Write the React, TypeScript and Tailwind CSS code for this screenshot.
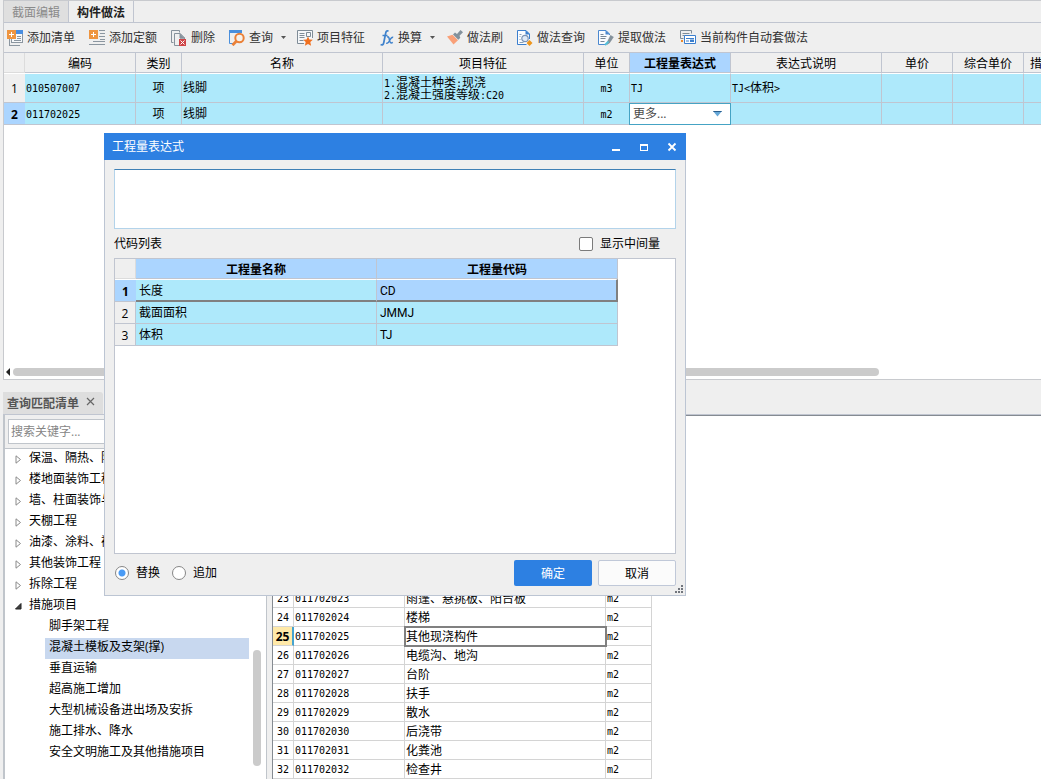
import React from "react";

const UI = "font-['Open_Sans','Noto_Sans_CJK_SC',sans-serif]";
const SONG = "font-['DejaVu_Sans_Mono','Noto_Sans_CJK_SC',monospace] text-[10px]";

function ListIcon() {
  return (
    <svg width="16" height="16" viewBox="0 0 16 16" shapeRendering="crispEdges" aria-hidden="true">
      <path d="M9 1.500h6.500v11h-11V9" fill="#f6f8fa" stroke="#8b96a0" />
      <path d="M9 0h7v4H9z" fill="#4a8ee0" />
      <path d="M2.500 9v6.500H13M10 6.500h4M10 8.500h4M7 10.500h7" fill="none" stroke="#8b96a0" />
      <path d="M0 0h9v9H0z" fill="#ee9540" />
      <path d="M4 2h1v5H4zM2 4h5v1H2z" fill="#fff" />
    </svg>
  );
}

function QuotaIcon() {
  return (
    <svg width="16" height="16" viewBox="0 0 16 16" shapeRendering="crispEdges" aria-hidden="true">
      <path d="M10 .500h6M11 3.500h5M10 6.500h6M11 9.500h5M4 11.500h12M0 14.500h16" stroke="#8b96a0" fill="none" />
      <path d="M0 0h9v9H0z" fill="#ee9540" />
      <path d="M4 2h1v5H4zM2 4h5v1H2z" fill="#fff" />
    </svg>
  );
}

function DeleteIcon() {
  return (
    <svg width="16" height="16" viewBox="0 0 16 16" aria-hidden="true">
      <path d="M2.500 12.500h-2V.500h8v2" fill="none" stroke="#87929c" />
      <path d="M8 15.500H3.500v-12H9l4.500 4.500v1M9 3.500V8h4.500z" fill="none" stroke="#87929c" />
      <path d="M9 4l4.500 4.500H9z" fill="#87929c" />
      <path d="M8 9h7v7H8z" fill="#cf4446" />
      <path d="M9.500 10.500l4 4m0-4l-4 4" stroke="#fff" />
    </svg>
  );
}

function QueryIcon() {
  return (
    <svg width="16" height="16" viewBox="0 0 16 16" aria-hidden="true">
      <path d="M4 13.500H.500V1" fill="none" stroke="#4a8fdc" />
      <path d="M0 0h13v3H0z" fill="#4a8fdc" />
      <circle cx="10.500" cy="8" r="4.200" fill="#f7f1ea" stroke="#ea8038" strokeWidth="2" />
      <path d="M7.500 11L3.500 15.200" stroke="#ea8038" strokeWidth="2.800" />
    </svg>
  );
}

function FeatureIcon() {
  return (
    <svg width="16" height="16" viewBox="0 0 16 16" aria-hidden="true">
      <path d="M7 13.500H.500v-13h15V8" fill="#f5f7f9" stroke="#7f8c97" />
      <path d="M2.500 3.500h5m-5 2h5m-5 2h5m-5 3h4M9.500 2.500h4v4h-4z" fill="none" stroke="#7f8c97" />
      <path d="M11 6.500l1.400 3 3.400.3-2.500 2.300.8 3.600-3.100-1.800-3.100 1.800.8-3.600-2.500-2.300 3.400-.3z" fill="#f07020" />
    </svg>
  );
}

function FxIcon() {
  return (
    <svg width="14" height="16" viewBox="0 0 14 16" fill="none" stroke="#3f82cc" aria-hidden="true">
      <path d="M8.500 1.200C6.800.2 6 1.500 5.600 3.500L3.800 12.500C3.400 14.700 2.300 15.500.6 14.600M2.500 5.500h5" strokeWidth="1.700" />
      <path d="M7 7.200c1.700-1 2 .5 2.500 3s1.300 3.500 3.300 2.200M13.200 7.200c-2-.3-3 2-3.700 3.500S7.800 13.700 6.300 13" strokeWidth="1.500" />
    </svg>
  );
}

function BrushIcon() {
  return (
    <svg width="16" height="15" viewBox="0 0 16 15" aria-hidden="true">
      <path d="M0 6.500l5.500-1.800 5.500 5.500L6.500 14.500z" fill="#f9a078" />
      <path d="M6 4.500L8 2.500l2 1.500L13.500 0 16 2.300l-3.500 3.500.8 2L11.300 9.800z" fill="#83919c" />
    </svg>
  );
}

function DocQueryIcon() {
  return (
    <svg width="16" height="16" viewBox="0 0 16 16" aria-hidden="true">
      <path d="M12.500 9V4L9 .500H.500v14h9" fill="#fafcff" stroke="#3b7fce" />
      <path d="M8.500 0L13 4.500H8.500z" fill="#3b7fce" />
      <path d="M2.500 4.500h2m-2 2h1m-1 3h1m-1 3h4" stroke="#8aa0b5" />
      <circle cx="8" cy="8.500" r="3.200" fill="#dfeaf8" stroke="#7d94b4" strokeWidth="1.200" />
      <path d="M12.500 10l3 3-3 3-3-3z" fill="#ee961d" />
    </svg>
  );
}

function ExtractIcon() {
  return (
    <svg width="16" height="16" viewBox="0 0 16 16" aria-hidden="true">
      <path d="M11.500 5V4L8 .500H.500v14h7" fill="#fafcff" stroke="#4b88cf" />
      <path d="M7.500 0L12 4.500H7.500z" fill="#4b88cf" />
      <path d="M2.500 4.500h3m-3 2h6m-6 2h5m-5 3h4" stroke="#788796" />
      <path d="M12.500 5L15.800 7l-4 6-3 2 .8-4z" fill="#84919b" />
      <path d="M7 15l3.500-3.500" stroke="#54bfd7" strokeWidth="2" />
    </svg>
  );
}

function AutoIcon() {
  return (
    <svg width="16" height="15" viewBox="0 0 16 15" aria-hidden="true">
      <path d="M3.500 8.500h-3V.500h11v3" fill="none" stroke="#7f8c97" />
      <path d="M2.500 3.500h7m-7 2h2" stroke="#7f8c97" />
      <path d="M4.500 5.500h11v8h-11z" fill="#fff" stroke="#3b7fce" />
      <path d="M6 8.500h8M6 11h3" stroke="#3b7fce" />
      <path d="M10 9.500h4v2.500h-4z" fill="#3b7fce" />
      <path d="M1 10h2v2H1z" fill="#ee8a2d" />
    </svg>
  );
}

const tools = [
  { label: "添加清单", icon: <ListIcon />, w: "w-[82px]" },
  { label: "添加定额", icon: <QuotaIcon />, w: "w-[82px]" },
  { label: "删除", icon: <DeleteIcon />, w: "w-[58px]" },
  { label: "查询", icon: <QueryIcon />, w: "w-[68px]", menu: true },
  { label: "项目特征", icon: <FeatureIcon />, w: "w-[83px]" },
  { label: "换算", icon: <FxIcon />, w: "w-[67px]", menu: true },
  { label: "做法刷", icon: <BrushIcon />, w: "w-[70px]" },
  { label: "做法查询", icon: <DocQueryIcon />, w: "w-[81px]" },
  { label: "提取做法", icon: <ExtractIcon />, w: "w-[82px]" },
  { label: "当前构件自动套做法", icon: <AutoIcon />, w: "w-[130px]" },
];

/* Ideographs are set at 12px beside half-width 10px monospace characters. */
function Mixed({ text }: { text: string }) {
  return (
    <>
      {text.split(/([\u3000-\u9fff]+)/).map((part, i) =>
        i % 2 ? (
          <span key={i} className="text-xs leading-none">{part}</span>
        ) : (
          part
        ),
      )}
    </>
  );
}

const columns = [
  { label: "编码", w: "w-[111px]" },
  { label: "类别", w: "w-[46px]" },
  { label: "名称", w: "w-[201px]" },
  { label: "项目特征", w: "w-[201px]" },
  { label: "单位", w: "w-[46px]" },
  { label: "工程量表达式", w: "w-[101px]", active: true },
  { label: "表达式说明", w: "w-[151px]" },
  { label: "单价", w: "w-[71px]" },
  { label: "综合单价", w: "w-[71px]" },
  { label: "措施项目", w: "w-[61px]" },
];

const cell = "border-r border-b border-[#c0c5d0] px-px pt-0.5 pb-0";

function MethodGrid() {
  return (
    <table className="w-[1081px] table-fixed border-separate border-spacing-0 text-xs">
      <thead>
        <tr className="h-5">
          <th className="w-[21px] border-r border-b border-[#dcdcdc] bg-[#efefef] p-0" />
          {columns.map((c) => (
            <th
              key={c.label}
              className={`${c.w} overflow-hidden border-r border-b border-[#c0c5d0] px-0 pt-0.5 pb-0 leading-4 whitespace-nowrap ${
                c.active ? "bg-[#abd5ff] font-bold" : "bg-[#efefef] font-normal"
              }`}
            >
              {c.label}
            </th>
          ))}
        </tr>
      </thead>
      <tbody className={SONG}>
        <tr className="h-[30px] bg-[#aee9fb]">
          <th className={`border-t border-b border-t-white border-b-[#c0c5d0] bg-[#efefef] px-0 pt-0.5 pb-0 text-xs font-normal ${UI}`}>1</th>
          <td className={`${cell} border-t border-t-white`}>010507007</td>
          <td className={`${cell} border-t border-t-white text-center`}><Mixed text="项" /></td>
          <td className={`${cell} border-t border-t-white`}><Mixed text="线脚" /></td>
          <td className={`${cell} border-t border-t-white leading-3`}>
            <div className="h-3"><Mixed text="1.混凝土种类:现浇" /></div>
            <div className="h-3"><Mixed text="2.混凝土强度等级:C20" /></div>
          </td>
          <td className={`${cell} border-t border-t-white text-center`}>m3</td>
          <td className={`${cell} border-t border-t-white`}>TJ</td>
          <td className={`${cell} border-t border-t-white`}><Mixed text="TJ<体积>" /></td>
          <td className={`${cell} border-t border-t-white`} />
          <td className={`${cell} border-t border-t-white`} />
          <td className={`${cell} border-t border-t-white`} />
        </tr>
        <tr className="h-[22px] bg-[#aee9fb]">
          <th className={`border-b border-[#c0c5d0] bg-[#abd5ff] px-0 pt-0.5 pb-0 text-xs font-bold ${UI}`}>2</th>
          <td className={cell}>011702025</td>
          <td className={`${cell} text-center`}><Mixed text="项" /></td>
          <td className={cell}><Mixed text="线脚" /></td>
          <td className={cell} />
          <td className={`${cell} text-center`}>m2</td>
          <td className="bg-white p-0">
            <div className="relative -ml-px flex h-[22px] items-center border border-[#45a3c4]">
              <select
                aria-label="工程量表达式"
                className={`h-5 w-full appearance-none bg-white pl-[3px] text-xs text-[#4a4a4a] outline-none ${UI}`}
              >
                <option>更多...</option>
              </select>
              <svg className="pointer-events-none absolute right-2" width="9" height="6" viewBox="0 0 9 6" aria-hidden="true">
                <path d="M0 0h9L4.500 5.500z" fill="#66a8d8" />
                <path d="M0 0h9l-.8 1H.8z" fill="#2a5d8c" />
              </svg>
            </div>
          </td>
          <td className={cell} />
          <td className={cell} />
          <td className={cell} />
          <td className={cell} />
        </tr>
      </tbody>
    </table>
  );
}

const branches = ["保温、隔热、防腐工程", "楼地面装饰工程", "墙、柱面装饰与隔断", "天棚工程", "油漆、涂料、裱糊工程", "其他装饰工程", "拆除工程"];
const leaves = ["脚手架工程", "混凝土模板及支架(撑)", "垂直运输", "超高施工增加", "大型机械设备进出场及安拆", "施工排水、降水", "安全文明施工及其他措施项目"];

function Tree() {
  return (
    <ul className="min-w-0 flex-1 overflow-hidden text-xs whitespace-nowrap">
      {branches.map((b) => (
        <li key={b} className="flex h-[21px] items-center pl-[10px]">
          <svg width="7" height="9" viewBox="0 0 7 9" aria-hidden="true">
            <path d="M1 .800L5.500 4.500 1 8.200z" fill="#fff" stroke="#8a8a8a" />
          </svg>
          <span className="pb-1 pl-[7px] leading-4">{b}</span>
        </li>
      ))}
      <li>
        <div className="flex h-[21px] items-center pl-[10px]">
          <svg width="7" height="7" viewBox="0 0 7 7" aria-hidden="true">
            <path d="M6 .500V6H.500z" fill="#404040" stroke="#222" />
          </svg>
          <span className="pb-1 pl-[7px] leading-4">措施项目</span>
        </div>
        <ul className="pl-10">
          {leaves.map((l, i) => (
            <li key={l} className={`h-[21px] pl-1 leading-[18px] ${i === 1 ? "bg-[#c8d8ef]" : ""}`}>{l}</li>
          ))}
        </ul>
      </li>
    </ul>
  );
}

const items = ["雨篷、悬挑板、阳台板", "楼梯", "其他现浇构件", "电缆沟、地沟", "台阶", "扶手", "散水", "后浇带", "化粪池", "检查井"];

function ItemGrid() {
  return (
    <table className={`mt-[173px] w-[379px] table-fixed border-separate border-spacing-0 ${SONG}`}>
      <colgroup>
        <col className="w-[21px]" />
        <col className="w-[111px]" />
        <col className="w-[201px]" />
        <col className="w-[46px]" />
      </colgroup>
      <tbody>
        {items.map((name, i) => {
          const on = i === 2;
          const c = "h-[19px] overflow-hidden whitespace-nowrap border-r border-b border-[#d4d4d4] px-px pt-0.5 pb-0 leading-none";
          return (
            <tr key={name}>
              <th
                className={`h-[19px] border-b border-[#d4d4d4] px-0 pt-0.5 pb-0 leading-none ${
                  on ? `border-r-2 border-r-[#45a3d0] bg-[#ffe9a8] text-xs font-bold ${UI}` : "border-r font-normal"
                }`}
              >
                {23 + i}
              </th>
              <td className={c}>0117020{23 + i}</td>
              <td className={`${c} ${on ? "outline-2 -outline-offset-1 outline-[#808080]" : ""}`}><Mixed text={name} /></td>
              <td className={c}>m2</td>
            </tr>
          );
        })}
      </tbody>
    </table>
  );
}

const codes = [
  ["长度", "CD"],
  ["截面面积", "JMMJ"],
  ["体积", "TJ"],
];

function ExpressionDialog() {
  return (
    <section
      role="dialog"
      aria-labelledby="dialog-title"
      className="absolute top-[133px] left-[104px] flex h-[463px] w-[582px] flex-col bg-[#efefef] text-xs"
    >
      <header className="flex h-[27px] shrink-0 items-center bg-[#2d80e2] pr-1 pl-2 text-white">
        <h2 id="dialog-title" className="flex-1 leading-4">工程量表达式</h2>
        <div className="flex gap-2">
          <button type="button" aria-label="最小化" className="grid size-5 place-items-center">
            <svg width="10" height="10" viewBox="0 0 10 10"><path d="M1 7h8v2H1z" fill="#fff" /></svg>
          </button>
          <button type="button" aria-label="最大化" className="grid size-5 place-items-center">
            <svg width="10" height="10" viewBox="0 0 10 10" shapeRendering="crispEdges"><path d="M1 2h8v7H1zM2 4v4h6V4z" fill="#fff" fillRule="evenodd" /></svg>
          </button>
          <button type="button" aria-label="关闭" className="grid size-5 place-items-center">
            <svg width="10" height="10" viewBox="0 0 10 10"><path d="M1.500 1.500l7 7m0-7l-7 7" stroke="#fff" strokeWidth="1.800" /></svg>
          </button>
        </div>
      </header>
      <div className="relative flex min-h-0 flex-1 flex-col border-x border-b border-[#bcc5d3] px-[9px] pt-[9px] pb-[9px]">
        <textarea aria-label="工程量表达式" className="h-[60px] shrink-0 resize-none border border-[#b3d3ea] border-t-[#3f80b5] bg-white outline-none" />
        <div className="flex h-[29px] shrink-0 items-center justify-between pr-4">
          <span className="leading-4">代码列表</span>
          <label className="flex items-center gap-[7px] leading-4">
            <input type="checkbox" className="size-[14px] appearance-none rounded-[2px] border border-[#7b7b7b] bg-white" />
            显示中间量
          </label>
        </div>
        <div className="min-h-0 flex-1 border border-[#c0c5d0] bg-white">
          <table className="w-[503px] table-fixed border-separate border-spacing-0">
            <thead>
              <tr className="h-5 leading-4">
                <th className="w-[21px] border-r border-b border-[#dcdcdc] bg-[#efefef] p-0" />
                <th className="w-[241px] border-r border-b border-[#c0c5d0] bg-[#abd5ff] px-0 pt-0.5 pb-0">工程量名称</th>
                <th className="w-[241px] border-r border-b border-[#c0c5d0] bg-[#abd5ff] px-0 pt-0.5 pb-0">工程量代码</th>
              </tr>
            </thead>
            <tbody className="leading-4">
              {codes.map(([name, code], i) => {
                const on = i === 0;
                const line = on ? "h-[23px] border-t border-t-white border-b-2 border-b-[#808080] pt-0.5" : "h-[22px] border-b border-b-[#c0c5d0] pt-0";
                return (
                  <tr key={code}>
                    <th
                      className={`border-b border-[#c0c5d0] px-0 pt-0.5 pb-0 ${
                        on ? "border-t border-t-white bg-[#abd5ff] font-bold" : "border-r bg-[#efefef] font-normal"
                      }`}
                    >
                      {i + 1}
                    </th>
                    <td className={`border-r border-r-[#c0c5d0] bg-[#aee9fb] px-[3px] pb-0 ${line}`}>{name}</td>
                    <td className={`px-[3px] pb-0 font-[Roboto,sans-serif] ${line} ${on ? "border-r-2 border-r-[#808080] bg-[#abd5ff]" : "border-r border-r-[#c0c5d0] bg-[#aee9fb]"}`}>{code}</td>
                  </tr>
                );
              })}
            </tbody>
          </table>
        </div>
        <footer className="flex h-8 shrink-0 items-end gap-1.5">
          <div className="flex flex-1 gap-3 pb-[5px] pl-px leading-4">
            {["替换", "追加"].map((t, i) => (
              <label key={t} className="flex items-center gap-[7px]">
                <input
                  type="radio"
                  name="mode"
                  defaultChecked={i === 0}
                  className="size-[14px] appearance-none rounded-full border border-[#868686] bg-white checked:bg-[radial-gradient(circle,#4a9bf5_3px,#fff_4px)]"
                />
                {t}
              </label>
            ))}
          </div>
          <button type="button" className="h-[26px] w-[78px] rounded-[2px] bg-[#2d80e2] pt-0.5 text-white">确定</button>
          <button type="button" className="h-[26px] w-[78px] rounded-[2px] border border-[#c0c8d8] bg-[#fbfbfb] pt-0.5">取消</button>
        </footer>
        <svg className="absolute right-[2px] bottom-[2px]" width="8" height="8" viewBox="0 0 8 8" shapeRendering="crispEdges" aria-hidden="true">
          <path d="M6 0h2v2H6zM3 3h2v2H3zM6 3h2v2H6zM0 6h2v2H0zM3 6h2v2H3zM6 6h2v2H6z" fill="#71757c" />
        </svg>
      </div>
    </section>
  );
}

export default function App() {
  return (
    <main className={`relative flex h-screen flex-col overflow-hidden bg-[#efefef] pl-[3px] text-xs text-black ${UI}`}>
      <section className="flex h-[380px] shrink-0 flex-col overflow-hidden border-y border-l border-[#c8cace]">
        <nav className="flex h-[22px] shrink-0 border-b border-[#c0c5d0]">
          <button type="button" className="w-[65px] border-r border-[#c0c5d0] bg-[#dfdfdf] pt-0.5 text-[#8a8a8a]">截面编辑</button>
          <button type="button" className="w-[65px] border-r border-[#c0c5d0] pt-0.5 font-bold text-[#222]">构件做法</button>
        </nav>
        <div className="flex h-[30px] shrink-0 items-center border-b border-[#c0c5d0] pl-[3px] text-[#333]">
          {tools.map((t) => (
            <button key={t.label} type="button" className={`flex shrink-0 items-center gap-1 whitespace-nowrap leading-4 ${t.w}`}>
              {t.icon}
              {t.label}
              {t.menu && (
                <svg className="ml-1" width="5" height="3" viewBox="0 0 5 3" aria-hidden="true">
                  <path d="M0 0h5L2.500 3z" fill="#555" />
                </svg>
              )}
            </button>
          ))}
        </div>
        <div className="min-h-0 flex-1 overflow-hidden bg-white">
          <MethodGrid />
        </div>
        <div className="flex h-[15px] shrink-0 items-center gap-[3px] bg-white pl-[2px]">
          <svg width="4" height="8" viewBox="0 0 4 8" aria-hidden="true"><path d="M4 0v8L0 4z" fill="#222" /></svg>
          <div className="h-2 w-[866px] rounded-full bg-[#cbcbcb]" />
        </div>
      </section>
      <div className="flex h-[35px] shrink-0 items-end border-b border-[#c0c5d0] pt-3">
        <div className="flex h-[22px] w-[100px] items-center gap-[7px] rounded-tr-[3px] bg-[#dedede] pl-1 font-bold text-[#555]">
          <span className="pt-0.5">查询匹配清单</span>
          <button type="button" aria-label="关闭" className="pb-1">
            <svg width="9" height="9" viewBox="0 0 9 9"><path d="M1 1l7 7m0-7l-7 7" stroke="#666" strokeWidth="1.200" /></svg>
          </button>
        </div>
      </div>
      <div className="flex min-h-0 flex-1">
        <aside className="flex w-[264px] shrink-0 flex-col border-r border-l-2 border-[#c0c5cb]">
          <div className="h-[34px] border-b border-[#c0c5cb] px-[3px] py-1">
            <input
              type="text"
              aria-label="搜索关键字"
              placeholder="搜索关键字..."
              className="h-[25px] w-full border border-[#c0c5cb] bg-white px-0.5 text-xs outline-none placeholder:text-[#858585]"
            />
          </div>
          <div className="flex min-h-0 flex-1 bg-white">
            <Tree />
            <div className="flex w-[17px] flex-col pt-[201px]">
              <div className="ml-1 h-[116px] w-2 rounded-full bg-[#cbcbcb]" />
            </div>
          </div>
        </aside>
        <div className="ml-[5px] min-w-0 flex-1 overflow-hidden border-t border-l border-[#858b92] bg-white">
          <ItemGrid />
        </div>
      </div>
      <ExpressionDialog />
    </main>
  );
}
